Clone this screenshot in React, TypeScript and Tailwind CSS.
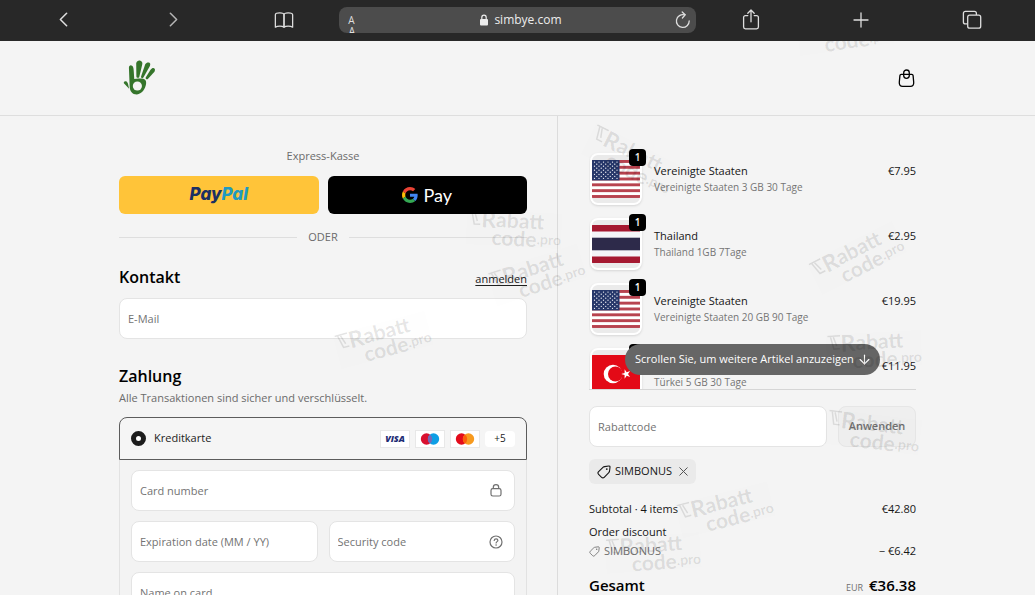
import React from 'react';
import { ArrowDown, ChevronLeft, ChevronRight, Plus, X } from 'lucide-react';

interface Item {
  id: number;
  title: string;
  variant: string;
  price: string;
  flag: 'us' | 'th' | 'tr';
}

const items: Item[] = [
  { id: 1, title: 'Vereinigte Staaten', variant: 'Vereinigte Staaten 3 GB 30 Tage', price: '€7.95', flag: 'us' },
  { id: 2, title: 'Thailand', variant: 'Thailand 1GB 7Tage', price: '€2.95', flag: 'th' },
  { id: 3, title: 'Vereinigte Staaten', variant: 'Vereinigte Staaten 20 GB 90 Tage', price: '€19.95', flag: 'us' },
  { id: 4, title: 'Türkei', variant: 'Türkei 5 GB 30 Tage', price: '€11.95', flag: 'tr' },
];

const stamps = [
  'left-[797px] top-[14px] -rotate-8',
  'left-[583px] top-[142px] rotate-27',
  'left-[466px] top-[211px] rotate-3',
  'left-[489px] top-[257px] -rotate-18',
  'left-[335px] top-[322px] -rotate-15',
  'left-[809px] top-[240px] -rotate-27',
  'left-[826px] top-[332px] -rotate-3',
  'left-[825px] top-[414px] rotate-7',
  'left-[677px] top-[492px] -rotate-14',
  'left-[605px] top-[535px] -rotate-4',
];

/* ---------- Icons ---------- */

const BookIcon = () => (
  <svg width="20" height="18" viewBox="0 0 22 20" fill="none" stroke="currentColor" strokeWidth="1.4" strokeLinejoin="round">
    <path d="M11 4.2C11 2.6 9.2 2 6.3 2 3.3 2 1.4 2.7 1.4 4.2V18C2.6 17.1 4.4 16.7 6.3 16.7 8.4 16.7 10 17.1 11 18Z" />
    <path d="M11 4.2C11 2.6 12.8 2 15.7 2 18.7 2 20.6 2.7 20.6 4.2V18C19.4 17.1 17.6 16.7 15.7 16.7 13.6 16.7 12 17.1 11 18Z" />
  </svg>
);

const ReloadIcon = () => (
  <svg width="16" height="18" viewBox="0 0 16 18" fill="none" stroke="currentColor" strokeWidth="1.3" strokeLinecap="round">
    <path d="M9.6 3.9A6.4 6.4 0 1 0 14.2 10" />
    <path d="M7.2 1 10.2 3.9 7.4 7" />
  </svg>
);

const ShareIcon = () => (
  <svg width="18" height="22" viewBox="0 0 18 22" fill="none" stroke="currentColor" strokeWidth="1.3" strokeLinecap="round" strokeLinejoin="round">
    <path d="M5.8 6.6H3.4A1.8 1.8 0 0 0 1.6 8.4V18A1.8 1.8 0 0 0 3.4 19.8H14.6A1.8 1.8 0 0 0 16.4 18V8.4A1.8 1.8 0 0 0 14.6 6.6H12.2" />
    <path d="M9 12.8V1.2M5.8 4.2 9 1 12.2 4.2" />
  </svg>
);

const TabsIcon = () => (
  <svg width="20" height="20" viewBox="0 0 20 20" fill="none" stroke="currentColor" strokeWidth="1.3">
    <rect x="5.7" y="5.2" width="13" height="13" rx="2" />
    <path d="M5.6 13.9H3.4A2 2 0 0 1 1.4 11.9V3.4A2 2 0 0 1 3.4 1.4H12.4A2 2 0 0 1 14.4 3.4V5.1" />
  </svg>
);

const SolidLockIcon = () => (
  <svg width="8" height="12" viewBox="0 0 8 12" fill="none">
    <rect x="0" y="5" width="8" height="6.5" rx="1" fill="currentColor" />
    <path d="M1.8 5.5V3.4a2.2 2.2 0 0 1 4.4 0V5.5" stroke="currentColor" strokeWidth="1.2" />
  </svg>
);

const HandLogo = () => (
  <svg width="33" height="36" viewBox="0 0 34 37" fill="#35752b">
    <path d="M6.1 8.2C6 6.2 7.2 5.2 8.6 5.5 10.6 6 10.8 8 11 10.4L11.6 19.6C13.6 18.9 15.5 18.8 17.6 19 22.5 18.9 24.2 20.6 23.8 24.2 23.2 29.8 19.2 35.2 14.4 35.4 9.6 35.5 7.2 32.5 6.9 27.5Z" />
    <circle cx="14.8" cy="26.7" r="4.7" fill="#f4f4f4" />
    <path d="M13.6 3.4C14.2 .9 16.1.1 18 .7 20 1.4 20.3 3.1 19.7 5.2L16.7 17.6C16 18.7 13.9 18.5 13.8 17.2Z" />
    <path d="M22.9 4.4C24.1 2.5 26 1.9 27.3 2.9 28.5 4 28.1 5.5 27.3 7L21 18C20.1 19.1 18.2 18.5 18.6 17Z" />
    <path d="M28.4 10C29.8 8.2 31.6 7.8 32.6 8.9 33.4 10 32.8 11.6 31.7 12.9L25.6 19.5C24.6 20.4 22.8 19.4 23.4 17.9Z" />
    <path d="M.9 24C.5 22.5 1.7 21.5 3 21.9 4 22.2 4.9 23.2 5.2 24.6L6.3 29.7Z" />
  </svg>
);

const BagIcon = () => (
  <svg width="17" height="19" viewBox="0 0 17 19" fill="none" stroke="currentColor" strokeWidth="1.3">
    <path d="M3.2 5.4H13.8C14.7 5.4 15 5.8 15.1 6.6L15.7 13.2C15.9 16 14.7 17.4 12.4 17.4H4.6C2.3 17.4 1.1 16 1.3 13.2L1.9 6.6C2 5.8 2.3 5.4 3.2 5.4Z" />
    <rect x="5.7" y="1" width="5.6" height="8.4" rx="2.8" />
  </svg>
);

const LockIcon = () => (
  <svg width="12" height="13" viewBox="0 0 12 13" fill="none" stroke="currentColor" strokeWidth="1.2">
    <rect x="1" y="4.6" width="10" height="7.4" rx="1.8" />
    <path d="M3.3 4.6V3.4a2.7 2.7 0 0 1 5.4 0V4.6" />
  </svg>
);

const HelpIcon = () => (
  <svg width="14" height="14" viewBox="0 0 14 14" fill="none" stroke="currentColor" strokeWidth="1.2" strokeLinecap="round">
    <circle cx="7" cy="7" r="6" />
    <path d="M5.2 5.5C5.3 4.4 6 3.8 7.1 3.8 8.2 3.8 8.9 4.5 8.9 5.4 8.9 6.6 7.1 6.7 7.1 8" />
    <circle cx="7.1" cy="10" r=".8" fill="currentColor" stroke="none" />
  </svg>
);

const TagIcon = ({ size }: { size: number }) => (
  <svg width={size} height={size} viewBox="0 0 14 14" fill="none" stroke="currentColor" strokeWidth="1.1" strokeLinejoin="round">
    <path d="M7.6 1.6 11.8 1C12.6.9 13.1 1.4 13 2.2L12.5 6.2C12.4 6.8 12.2 7.2 11.8 7.6L7.2 12.3C6.4 13.1 5.4 13.1 4.6 12.3L1.6 9.3C.8 8.5.8 7.5 1.6 6.7L6.2 2.2C6.6 1.8 7 1.7 7.6 1.6Z" />
    <circle cx="9.8" cy="4.1" r=".9" fill="currentColor" stroke="none" />
  </svg>
);

const GoogleIcon = () => (
  <svg width="16" height="16" viewBox="0 0 48 48">
    <path fill="#ea4335" d="M24 9.5c3.54 0 6.71 1.22 9.21 3.6l6.85-6.85C35.9 2.38 30.47 0 24 0 14.62 0 6.51 5.38 2.56 13.22l7.98 6.19C12.43 13.72 17.74 9.5 24 9.5z" />
    <path fill="#4285f4" d="M46.98 24.55c0-1.57-.15-3.09-.38-4.55H24v9.02h12.94c-.58 2.96-2.26 5.48-4.78 7.18l7.73 6c4.51-4.18 7.09-10.36 7.09-17.65z" />
    <path fill="#fbbc05" d="M10.53 28.59c-.48-1.45-.76-2.99-.76-4.59s.27-3.14.76-4.59l-7.98-6.19C.92 16.46 0 20.12 0 24c0 3.88.92 7.54 2.56 10.78l7.97-6.19z" />
    <path fill="#34a853" d="M24 48c6.48 0 11.93-2.13 15.89-5.81l-7.73-6c-2.15 1.45-4.92 2.3-8.16 2.3-6.26 0-11.57-4.22-13.47-9.91l-7.98 6.19C6.51 42.62 14.62 48 24 48z" />
  </svg>
);

/* ---------- Flags ---------- */

const Flag = ({ code }: { code: Item['flag'] }) => {
  if (code === 'us') {
    return (
      <svg className="w-full" viewBox="0 0 48 38">
        <rect width="48" height="38" fill="#fff" />
        {[0, 1, 2, 3, 4, 5, 6].map((n) => (
          <rect key={n} y={n * 5.84} width="48" height="2.92" fill="#b8434f" />
        ))}
        <rect width="27.5" height="20.4" fill="#26376a" />
        {Array.from({ length: 9 }, (_, r) =>
          Array.from({ length: r % 2 ? 5 : 6 }, (_, c) => (
            <circle key={`${r}-${c}`} cx={2.5 + c * 4.5 + (r % 2 ? 2.25 : 0)} cy={2.1 + r * 2.03} r=".65" fill="#fff" />
          ))
        )}
      </svg>
    );
  }
  if (code === 'th') {
    return (
      <svg className="w-full" viewBox="0 0 48 38">
        <rect width="48" height="38" fill="#f4f5f8" />
        <rect width="48" height="6.5" fill="#a51931" />
        <rect y="12.7" width="48" height="12.6" fill="#2d2a4a" />
        <rect y="31.5" width="48" height="6.5" fill="#a51931" />
      </svg>
    );
  }
  return (
    <svg className="w-full" viewBox="0 0 48 38">
      <rect width="48" height="38" fill="#e30a17" />
      <circle cx="21" cy="19" r="9.3" fill="#fff" />
      <circle cx="23.4" cy="19" r="7.4" fill="#e30a17" />
      <path fill="#fff" d="M29.2 19 32.6 17.9V14.3L34.7 17.2 38.1 16.1 36 19 38.1 21.9 34.7 20.8 32.6 23.7V20.1Z" />
    </svg>
  );
};

/* ---------- Small parts ---------- */

interface FieldProps {
  id: string;
  label: string;
  icon?: React.ReactNode;
}

const Field: React.FC<FieldProps> = ({ id, label, icon }) => (
  <div className="flex h-[41px] min-w-0 flex-1 items-center rounded-lg border border-[#e4e4e4] bg-white px-2">
    <label htmlFor={id} className="sr-only">
      {label}
    </label>
    <input
      id={id}
      type="text"
      placeholder={label}
      className="w-full min-w-0 flex-1 bg-transparent pt-[2px] outline-none placeholder:text-[#737373]"
    />
    {icon && <span className="flex w-5 shrink-0 justify-center text-[#707070]">{icon}</span>}
  </div>
);

const Overlap = ({ left, right, middle }: { left: string; right: string; middle: string }) => (
  <svg width="20" height="12" viewBox="0 0 20 12">
    <circle cx="6.5" cy="6" r="5.7" fill={left} />
    <circle cx="13.5" cy="6" r="5.7" fill={right} />
    <path d="M10 1.5A5.7 5.7 0 0 1 10 10.5 5.7 5.7 0 0 1 10 1.5Z" fill={middle} />
  </svg>
);

const Stamp = ({ className }: { className: string }) => (
  <div
    aria-hidden="true"
    className={`pointer-events-none absolute h-[36px] w-[96px] bg-black/[0.005] font-['Lato',sans-serif] font-bold text-black/10 ${className}`}
  >
    <div className="flex h-[18px] items-center pl-[2px] leading-[18px]">
      <svg width="13" height="16" viewBox="0 0 13 16" fill="none" stroke="currentColor" strokeWidth="1.5">
        <path d="M0 1H13M3 1 6 14H12M6 2 9 11" />
      </svg>
      <span className="text-[23px]">R</span>
      <span className="text-[21px]">abatt</span>
    </div>
    <div className="flex h-[18px] items-center pl-[26px] leading-[16px]">
      <span className="text-[21px]">code</span>
      <span className="text-[14px]">.pro</span>
    </div>
  </div>
);

/* ---------- Sections ---------- */

const BrowserBar = () => (
  <nav
    aria-label="Browser"
    className="relative z-10 grid h-[41px] shrink-0 grid-cols-[repeat(3,31fr)_100fr_repeat(3,31fr)] items-center justify-items-center bg-[#282828] px-2 pb-[2px] text-[#dedede]"
  >
    <button type="button" aria-label="Zurück">
      <ChevronLeft size={25} strokeWidth={1.5} />
    </button>
    <button type="button" aria-label="Vorwärts" className="text-[#b4b4b4]">
      <ChevronRight size={25} strokeWidth={1.5} />
    </button>
    <button type="button" aria-label="Lesezeichen">
      <BookIcon />
    </button>
    <div className="flex h-[26px] w-full items-center justify-between overflow-hidden rounded-lg bg-[#4c4c4c] px-2">
      <button type="button" aria-label="Schriftgröße" className="mt-[10px] flex h-[20px] w-2 flex-col text-[10px] leading-[11px]">
        <span>A</span>
        <span className="pl-[1px]">A</span>
      </button>
      <span className="ml-3 flex items-center gap-[6px] text-[12px] text-[#ececec]">
        <SolidLockIcon />
        simbye.com
      </span>
      <button type="button" aria-label="Neu laden" className="mr-[-3px]">
        <ReloadIcon />
      </button>
    </div>
    <button type="button" aria-label="Teilen">
      <ShareIcon />
    </button>
    <button type="button" aria-label="Neuer Tab">
      <Plus size={24} strokeWidth={1.3} />
    </button>
    <button type="button" aria-label="Tabs">
      <TabsIcon />
    </button>
  </nav>
);

const Checkout = () => (
  <section className="border-r border-[#dcdcdc] pr-[30px]">
    <div className="ml-auto w-full max-w-[408px] pt-8">
      <p className="text-center leading-4 text-[#6b6b6b]">Express-Kasse</p>
      <div className="mt-3 flex gap-[9px]">
        <button
          type="button"
          className="h-[38px] flex-1 rounded-md bg-[#ffc439] font-['Inter',sans-serif] text-[17px] font-extrabold text-[#1b2f63] italic"
        >
          Pay<span className="text-[#1f9ac0]">Pal</span>
        </button>
        <button
          type="button"
          className="flex h-[38px] flex-1 items-center justify-center gap-[5px] rounded-md bg-black font-['Lato',sans-serif] text-[18px] text-white"
        >
          <GoogleIcon />
          Pay
        </button>
      </div>
      <div className="mt-[15px] flex items-center gap-[11px] leading-4 text-[#6b6b6b]">
        <hr className="flex-1 border-[#dedede]" />
        ODER
        <hr className="flex-1 border-[#dedede]" />
      </div>

      <div className="mt-5 flex items-end justify-between">
        <h2 className="text-[16px] leading-6 font-semibold text-black">Kontakt</h2>
        <a href="#login" className="leading-5 text-[#202020] underline underline-offset-2">
          anmelden
        </a>
      </div>
      <div className="mt-[9px] flex">
        <Field id="email" label="E-Mail" />
      </div>

      <h2 className="mt-[25px] text-[16px] leading-6 font-semibold text-black">Zahlung</h2>
      <p className="mt-[2px] leading-4 text-[#6b6b6b]">Alle Transaktionen sind sicher und verschlüsselt.</p>

      <div className="mt-[11px]">
        <div className="flex h-[43px] items-center rounded-t-lg border border-[#5c5c5c] bg-[#f5f5f5] px-[11px]">
          <input
            id="card"
            type="radio"
            name="method"
            defaultChecked
            className="size-[15px] appearance-none rounded-full border-[#1c1c1c] bg-white checked:border-[5px]"
          />
          <label htmlFor="card" className="ml-[8px] flex-1 text-[#1c1c1c]">
            Kreditkarte
          </label>
          <div className="flex items-center gap-[5px]">
            <span className="flex h-[18px] w-[30px] items-center justify-center border border-[#e8e8e8] bg-white text-[9px] font-extrabold text-[#1d2c74] italic">
              VISA
            </span>
            <span className="flex h-[18px] w-[30px] items-center justify-center border border-[#e8e8e8] bg-white">
              <Overlap left="#d9102f" right="#0d9ee5" middle="#7768b8" />
            </span>
            <span className="flex h-[18px] w-[30px] items-center justify-center border border-[#e8e8e8] bg-white">
              <Overlap left="#e30b1b" right="#f79a1e" middle="#fb5d0c" />
            </span>
            <span className="flex h-4 w-[30px] items-center justify-center rounded-sm bg-white text-[10px] font-medium text-[#222]">
              +5
            </span>
          </div>
        </div>
        <div className="flex flex-col gap-[10px] border-x border-[#e2e2e2] bg-[#f3f3f3] px-[11px] py-[10px]">
          <div className="flex">
            <Field id="number" label="Card number" icon={<LockIcon />} />
          </div>
          <div className="flex gap-[11px]">
            <Field id="expiry" label="Expiration date (MM / YY)" />
            <Field id="cvc" label="Security code" icon={<HelpIcon />} />
          </div>
          <div className="flex">
            <Field id="name" label="Name on card" />
          </div>
        </div>
      </div>
    </div>
  </section>
);

const OrderSummary = () => (
  <aside className="pl-[31px]">
    <div className="w-full max-w-[327px] text-[#161616]">
      <div className="relative h-[274px] overflow-hidden border-b border-[#d6d6d6] pt-[37px]">
        <ul className="flex flex-col gap-[13px] pl-[1px]">
          {items.map((item) => (
            <li key={item.id} className="flex h-[52px]">
              <div className="relative h-[52px] w-[52px] shrink-0">
                <div className="flex h-full items-center overflow-hidden rounded-lg border-2 border-white bg-[#ebebeb] shadow-sm">
                  <Flag code={item.flag} />
                </div>
                <span className="absolute -top-[4px] -right-[4px] flex size-[17px] items-center justify-center rounded bg-black text-[10px] font-semibold text-white">
                  1
                </span>
              </div>
              <div className="ml-3 flex-1 pt-[10px]">
                <p className="leading-4">{item.title}</p>
                <p className="text-[10px] leading-4 text-[#757575]">{item.variant}</p>
              </div>
              <span className="pt-[10px] leading-4">{item.price}</span>
            </li>
          ))}
        </ul>
        <button
          type="button"
          className="absolute bottom-[14px] left-[36px] flex h-[31px] items-center gap-[3px] rounded-full bg-[#666] pr-2 pl-[10px] whitespace-nowrap text-white"
        >
          Scrollen Sie, um weitere Artikel anzuzeigen
          <ArrowDown size={15} strokeWidth={1.8} />
        </button>
      </div>

      <form className="mt-4 flex gap-[11px]">
        <Field id="discount" label="Rabattcode" />
        <button
          type="button"
          className="h-[41px] w-[78px] rounded-lg border border-[#e6e6e6] bg-[#efefef] font-semibold text-[#757575]"
        >
          Anwenden
        </button>
      </form>

      <div className="mt-3 inline-flex h-[25px] items-center gap-1 rounded-md bg-[#eaeaea] pr-[5px] pl-2">
        <TagIcon size={14} />
        SIMBONUS
        <button type="button" aria-label="Rabatt entfernen" className="text-[#555]">
          <X size={15} strokeWidth={1.6} />
        </button>
      </div>

      <dl className="mt-[17px] leading-4">
        <div className="flex justify-between">
          <dt>Subtotal · 4 items</dt>
          <dd>€42.80</dd>
        </div>
        <div className="mt-[7px]">
          <dt>Order discount</dt>
        </div>
        <div className="mt-[3px] flex justify-between">
          <dt className="flex items-center gap-1 text-[#707070]">
            <TagIcon size={11} />
            SIMBONUS
          </dt>
          <dd>− €6.42</dd>
        </div>
        <div className="mt-[14px] flex items-baseline justify-between font-semibold text-black">
          <dt className="text-[15px] leading-6">Gesamt</dt>
          <dd className="flex items-baseline gap-[6px] text-[15px] leading-6">
            <span className="text-[9px] font-normal text-[#707070]">EUR</span>
            €36.38
          </dd>
        </div>
      </dl>
    </div>
  </aside>
);

export default function App() {
  return (
    <div className="relative flex h-screen flex-col overflow-hidden bg-[#f4f4f4] font-['Open_Sans',sans-serif] text-[11px]">
      <BrowserBar />
      <header className="shrink-0 border-b border-[#dedede]">
        <div className="mx-auto flex h-[74px] max-w-[797px] items-center justify-between px-[1px] pl-1">
          <a href="#home" aria-label="simbye">
            <HandLogo />
          </a>
          <button type="button" aria-label="Warenkorb">
            <BagIcon />
          </button>
        </div>
      </header>
      <main className="grid flex-1 grid-cols-[558fr_477fr]">
        <Checkout />
        <OrderSummary />
      </main>
      {stamps.map((place) => (
        <Stamp key={place} className={place} />
      ))}
    </div>
  );
}
